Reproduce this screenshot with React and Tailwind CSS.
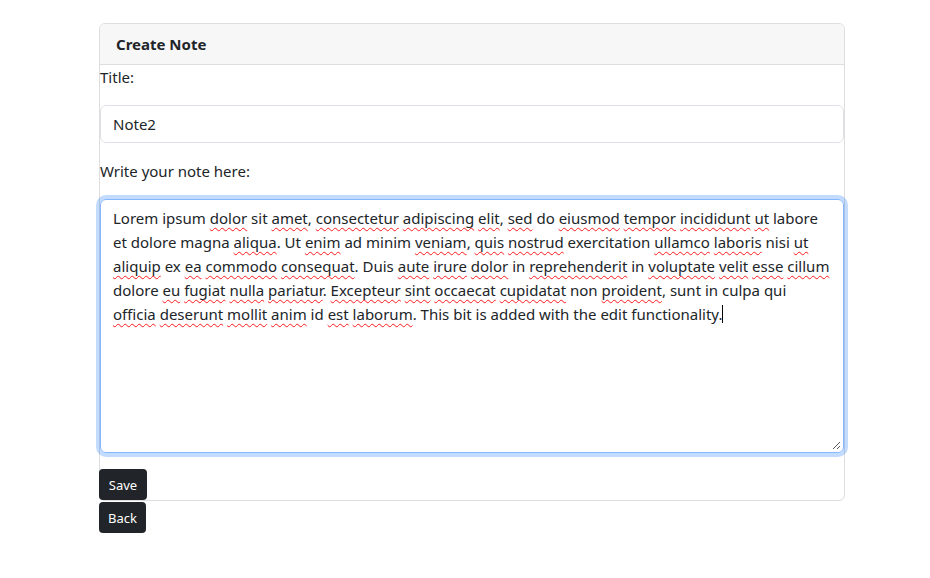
const lines = [
  'Lorem ipsum ~dolor sit ~amet, ~consectetur ~adipiscing ~elit, ~sed do ~eiusmod ~tempor ~incididunt ~ut labore',
  'et dolore magna ~aliqua. Ut ~enim ad minim ~veniam, ~quis ~nostrud exercitation ~ullamco ~laboris nisi ~ut',
  '~aliquip ex ~ea ~commodo ~consequat. Duis ~aute ~irure ~dolor in ~reprehenderit in ~voluptate ~velit ~esse ~cillum',
  'dolore ~eu ~fugiat ~nulla ~pariatur. ~Excepteur ~sint ~occaecat ~cupidatat non ~proident, sunt in culpa qui',
  '~officia ~deserunt ~mollit ~anim id ~est ~laborum. This bit is added with the edit functionality.',
]

function Word({ w }) {
  const m = w.match(/^~([A-Za-z]+)(.*)$/)
  if (!m) return <span>{w}</span>
  return (
    <span>
      <span className="underline decoration-wavy decoration-[#ff1a1a] decoration-1 underline-offset-[3px] [text-decoration-skip-ink:none]">{m[1]}</span>
      {m[2]}
    </span>
  )
}

function Line({ text, last }) {
  const words = text.split(' ')
  return (
    <div className="whitespace-nowrap h-6 flex items-center">
      <span>
        {words.map((w, i) => (
          <span key={i}>
            <Word w={w} />
            {i < words.length - 1 ? ' ' : ''}
          </span>
        ))}
      </span>
      {last && <span className="inline-block w-px h-[18px] bg-black" />}
    </div>
  )
}

export default function App() {
  return (
    <div className="min-h-screen bg-white pl-[99px] pt-[23px] text-[#212529] text-[15px] leading-6 font-['Noto_Sans',sans-serif]">
      <div className="w-[746px]">
        <div className="border border-[#dedede] rounded-md flex flex-col">
          {/* header */}
          <div className="h-[41px] bg-[#f7f7f7] border-b border-[#dedede] rounded-t-md px-4 flex items-center font-bold">
            Create Note
          </div>
          <div className="flex flex-col">
            <label className="leading-6">Title:</label>
            <div className="mt-4 h-[38px] border border-[#dee2e6] rounded-md px-3 flex items-center">Note2</div>
            <label className="leading-6 mt-4">Write your note here:</label>
            {/* textarea */}
            <div className="relative mt-4 h-[254px] border border-[#86b7fe] rounded-md px-3 py-[6px] shadow-[0_0_0_4px_rgba(13,110,253,0.25)]">
              {lines.map((l, i) => (
                <Line key={i} text={l} last={i === lines.length - 1} />
              ))}
              <svg className="absolute right-[2px] bottom-[2px]" width="9" height="9" viewBox="0 0 9 9">
                <path d="M1 8 L8 1 M5 8 L8 5" stroke="#555" strokeWidth="1" />
              </svg>
            </div>
            <div className="mt-4 -ml-px">
              <button className="h-[31px] w-[48px] rounded-[4px] bg-[#212529] text-white text-[13px]">Save</button>
            </div>
          </div>
        </div>
        <div className="mt-px">
          <button className="h-[31px] w-[47px] rounded-[4px] bg-[#212529] text-white text-[13px]">Back</button>
        </div>
      </div>
    </div>
  )
}
